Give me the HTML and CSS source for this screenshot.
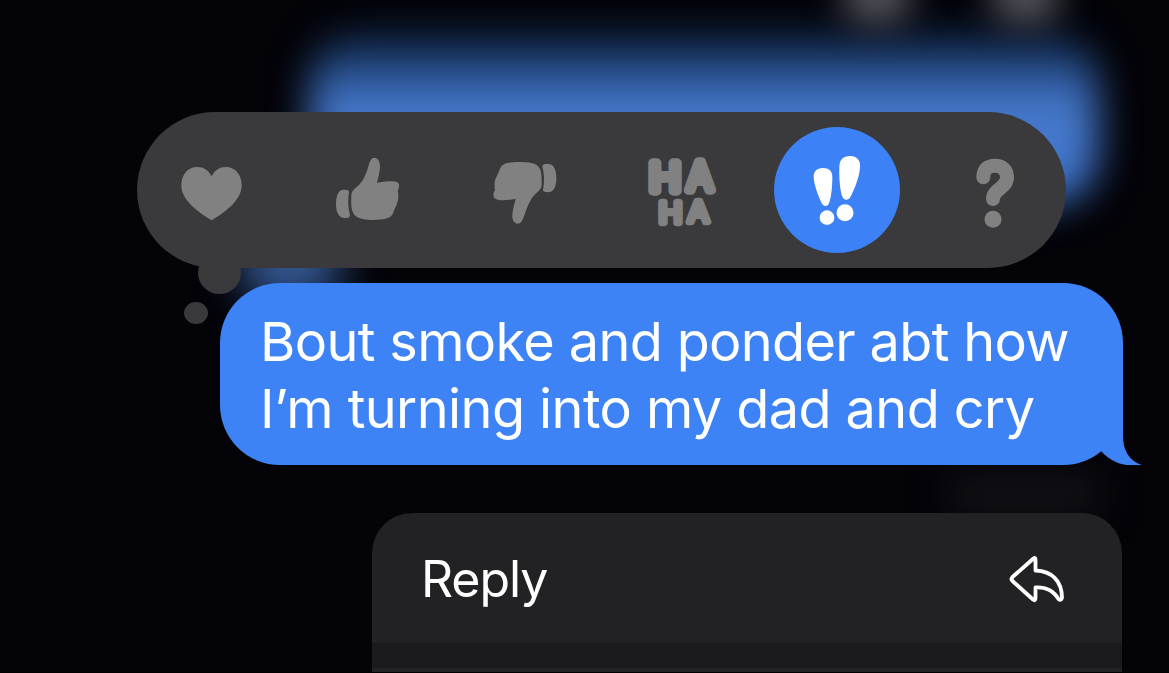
FILE: index.html
```html
<!DOCTYPE html>
<html lang="en">

<head>
  <meta charset="UTF-8" />
  <meta name="viewport" content="width=device-width, initial-scale=1.0" />
  <title>Messages</title>
  <link rel="stylesheet" href="styles.css">
</head>

<body>
  <main class="screen">
    <!-- blurred conversation behind the menu -->
    <div class="backdrop">
      <div class="blur blur-message"></div>
      <div class="blur blur-tail"></div>
      <div class="blur blur-dot dot-left"></div>
      <div class="blur blur-dot dot-right"></div>
      <div class="blur blur-status"></div>
    </div>

    <div class="reactions">
      <button class="reaction" aria-label="Heart">
        <svg viewBox="-63 -39 378 378">
          <path d="M128 109 C119 91 104 81 84 81 C56 81 37 105 37 136 C37 176 75 209 128 241 C181 209 218 176 218 136 C218 105 199 81 171 81 C151 81 137 91 128 109Z" />
        </svg>
      </button>
      <button class="reaction" aria-label="Thumbs up">
        <svg viewBox="405 -39 378 378">
          <path d="M544 168 C544 154 552 148 563 139 C582 122 590 97 596 76 C600 62 605 53 613 53 C625 53 631 67 630 82 C629 99 624 114 621 129 C641 124 670 122 682 127 C690 131 688 145 683 152 C687 166 684 183 680 194 C673 207 671 217 666 225 C659 236 639 239 612 240 C588 240 566 236 556 227 C543 217 543 190 544 168Z" />
          <path d="M515 150 C525 148 537 149 537 156 C533 179 534 202 540 226 C540 234 530 235 521 234 C505 232 498 214 498 192 C498 169 505 153 515 150Z" />
        </svg>
      </button>
      <button class="reaction" aria-label="Thumbs down">
        <svg viewBox="-55 -39 378 378">
          <path d="M187 132 C187 147 179 152 168 162 C151 178 143 204 135 226 C130 241 125 251 116 251 C104 251 98 239 99 225 C100 208 105 192 109 176 C90 181 60 183 49 177 C40 173 41 158 47 151 C44 136 46 121 51 111 C60 96 60 89 66 79 C74 69 95 66 119 66 C143 66 164 68 175 77 C187 87 187 110 187 132Z" />
          <path d="M213 156 C203 157 192 157 191 151 C196 126 195 103 189 79 C189 72 199 71 209 72 C224 73 231 91 231 114 C231 136 225 152 213 156Z" />
        </svg>
      </button>
      <button class="reaction" aria-label="Haha">
        <svg class="haha" viewBox="414 -39 378 378">
          <text class="ha-big" x="508" y="152" textLength="94" lengthAdjust="spacingAndGlyphs">H</text>
          <text class="ha-big" x="622" y="150" textLength="76" lengthAdjust="spacingAndGlyphs">A</text>
          <text class="ha-small" x="536" y="249" textLength="70" lengthAdjust="spacingAndGlyphs">H</text>
          <text class="ha-small" x="624" y="247" textLength="62" lengthAdjust="spacingAndGlyphs">A</text>
        </svg>
      </button>
      <button class="reaction selected" aria-label="Emphasize">
        <svg viewBox="44 36 378 378">
          <path d="M163 184 C163 167 175 159 191 159 C208 159 220 168 219 187 C219 217 216 241 211 259 C208 269 205 273 199 273 C193 273 189 269 185 260 C174 236 163 205 163 184Z" />
          <path d="M240 156 C240 134 252 123 272 123 C293 123 304 136 302 157 C300 187 287 218 276 241 C271 251 268 254 262 254 C254 254 250 249 247 239 C241 216 239 184 240 156Z" />
          <circle cx="203" cy="308" r="22" />
          <circle cx="257" cy="293" r="25.500" />
        </svg>
      </button>
      <button class="reaction" aria-label="Question">
        <svg viewBox="513 36 378 378">
          <path class="hook" d="M670 187 C670 162 684 152 705 152 C727 152 741 165 741 187 C741 220 699 222 699 252" />
          <circle cx="699" cy="313" r="25.500" />
        </svg>
      </button>
      <span class="tail tail-big"></span>
      <span class="tail tail-small"></span>
    </div>

    <div class="message">
      <p>Bout smoke and ponder abt how<br><span class="line-two">I’m turning into my dad and cry</span></p>
      <svg class="message-tail" viewBox="0 0 42 60">
        <path d="M0 0 H23 V31 C23 45 29 56 42 60 C27 62 13 59 2 47 L0 45Z" />
      </svg>
    </div>

    <div class="menu">
      <button class="menu-item">
        <span>Reply</span>
        <svg class="reply-icon" viewBox="0 0 56 50">
          <path d="M24.500 4.500 Q26.500 3 26.500 6 V16.500 C43 17 53 27 53 44 Q52 47 49.500 45 C44 36 37 33 26.500 33.500 V44 Q26.500 47.500 24 45.500 L3.500 27 Q1.500 25 3.500 23Z" />
        </svg>
      </button>
      <div class="divider"></div>
      <div class="menu-item"></div>
    </div>
  </main>
</body>

</html>
```

FILE: styles.css
```css
* {
  box-sizing: border-box;
}
body {
  margin: 0;
  background: #000;
  font-family: Inter, "Liberation Sans", sans-serif;
  color: #fff;
  overflow: hidden;
}
button {
  border: none;
  margin: 0;
  padding: 0;
  background: none;
  color: inherit;
  font: inherit;
}
.screen {
  position: relative;
  width: 1169px;
  height: 672px;
  padding-top: 112px;
  background: #030308;
  overflow: hidden;
}

/* backdrop */
.backdrop {
  position: absolute;
  inset: 0;
}
.blur {
  position: absolute;
}
.blur-message {
  left: 310px;
  top: 32px;
  width: 788px;
  height: 173px;
  border-radius: 50px;
  background: linear-gradient(#0c1c34, #234a86 22%, #3e6dba 36%, #477ace 50%, #3d72c8);
  filter: blur(19px);
}
.blur-tail {
  left: 238px;
  top: 230px;
  width: 104px;
  height: 70px;
  border-radius: 40px;
  background: #365c98;
  filter: blur(22px);
}
.blur-dot {
  top: -30px;
  width: 72px;
  height: 54px;
  border-radius: 50%;
  background: #55555d;
  filter: blur(17px);
}
.dot-left {
  left: 841px;
}
.dot-right {
  left: 989px;
}
.blur-status {
  left: 950px;
  top: 474px;
  width: 150px;
  height: 40px;
  background: #121217;
  filter: blur(18px);
}

/* reaction bar */
.reactions {
  position: relative;
  display: flex;
  justify-content: space-between;
  align-items: center;
  width: 929px;
  height: 156px;
  margin-left: 137px;
  padding: 0 9px 0 11px;
  border-radius: 78px;
  background: #3a3a3c;
}
.reaction {
  width: 126px;
  height: 126px;
  border-radius: 50%;
}
.reaction svg {
  display: block;
  width: 100%;
  height: 100%;
  fill: #818181;
}
.reaction.selected {
  background: #3c82f6;
}
.selected svg {
  fill: #fff;
}
.reaction .hook {
  fill: none;
  stroke: #818181;
  stroke-width: 42;
  stroke-linecap: round;
}
.haha text {
  font-weight: 300;
  stroke: #818181;
  stroke-linejoin: round;
}
.ha-big {
  font-size: 115px;
  stroke-width: 28px;
}
.ha-small {
  font-size: 86px;
  stroke-width: 20px;
}
.tail {
  position: absolute;
  border-radius: 50%;
  background: #3a3a3c;
}
.tail-big {
  left: 61px;
  top: 140px;
  width: 43px;
  height: 42px;
}
.tail-small {
  left: 47px;
  top: 190px;
  width: 24px;
  height: 22px;
}

/* message bubble */
.message {
  position: relative;
  width: 903px;
  height: 182px;
  margin: 15px 0 0 220px;
  padding: 25px 40px;
  border-radius: 60px;
  background: #3e83f6;
}
.message p {
  margin: 0;
  font-size: 54px;
  line-height: 67px;
  letter-spacing: -0.64px;
  white-space: nowrap;
}
.line-two {
  letter-spacing: -0.57px;
}
.message-tail {
  position: absolute;
  left: 880px;
  bottom: 0;
  width: 42px;
  height: 60px;
  fill: #3e83f6;
}

/* context menu */
.menu {
  position: relative;
  width: 750px;
  margin: 48px 0 0 372px;
  border-radius: 40px 40px 0 0;
  background: #222224;
  overflow: hidden;
}
.menu-item {
  display: flex;
  justify-content: space-between;
  align-items: center;
  width: 100%;
  height: 130px;
  padding: 2px 57px 0 49px;
  font-size: 50px;
  letter-spacing: -1.1px;
}
.reply-icon {
  width: 56px;
  height: 50px;
  fill: none;
  stroke: #fff;
  stroke-width: 3.8;
  stroke-linejoin: round;
}
.divider {
  height: 25px;
  background: #1b1b1d;
}
```
